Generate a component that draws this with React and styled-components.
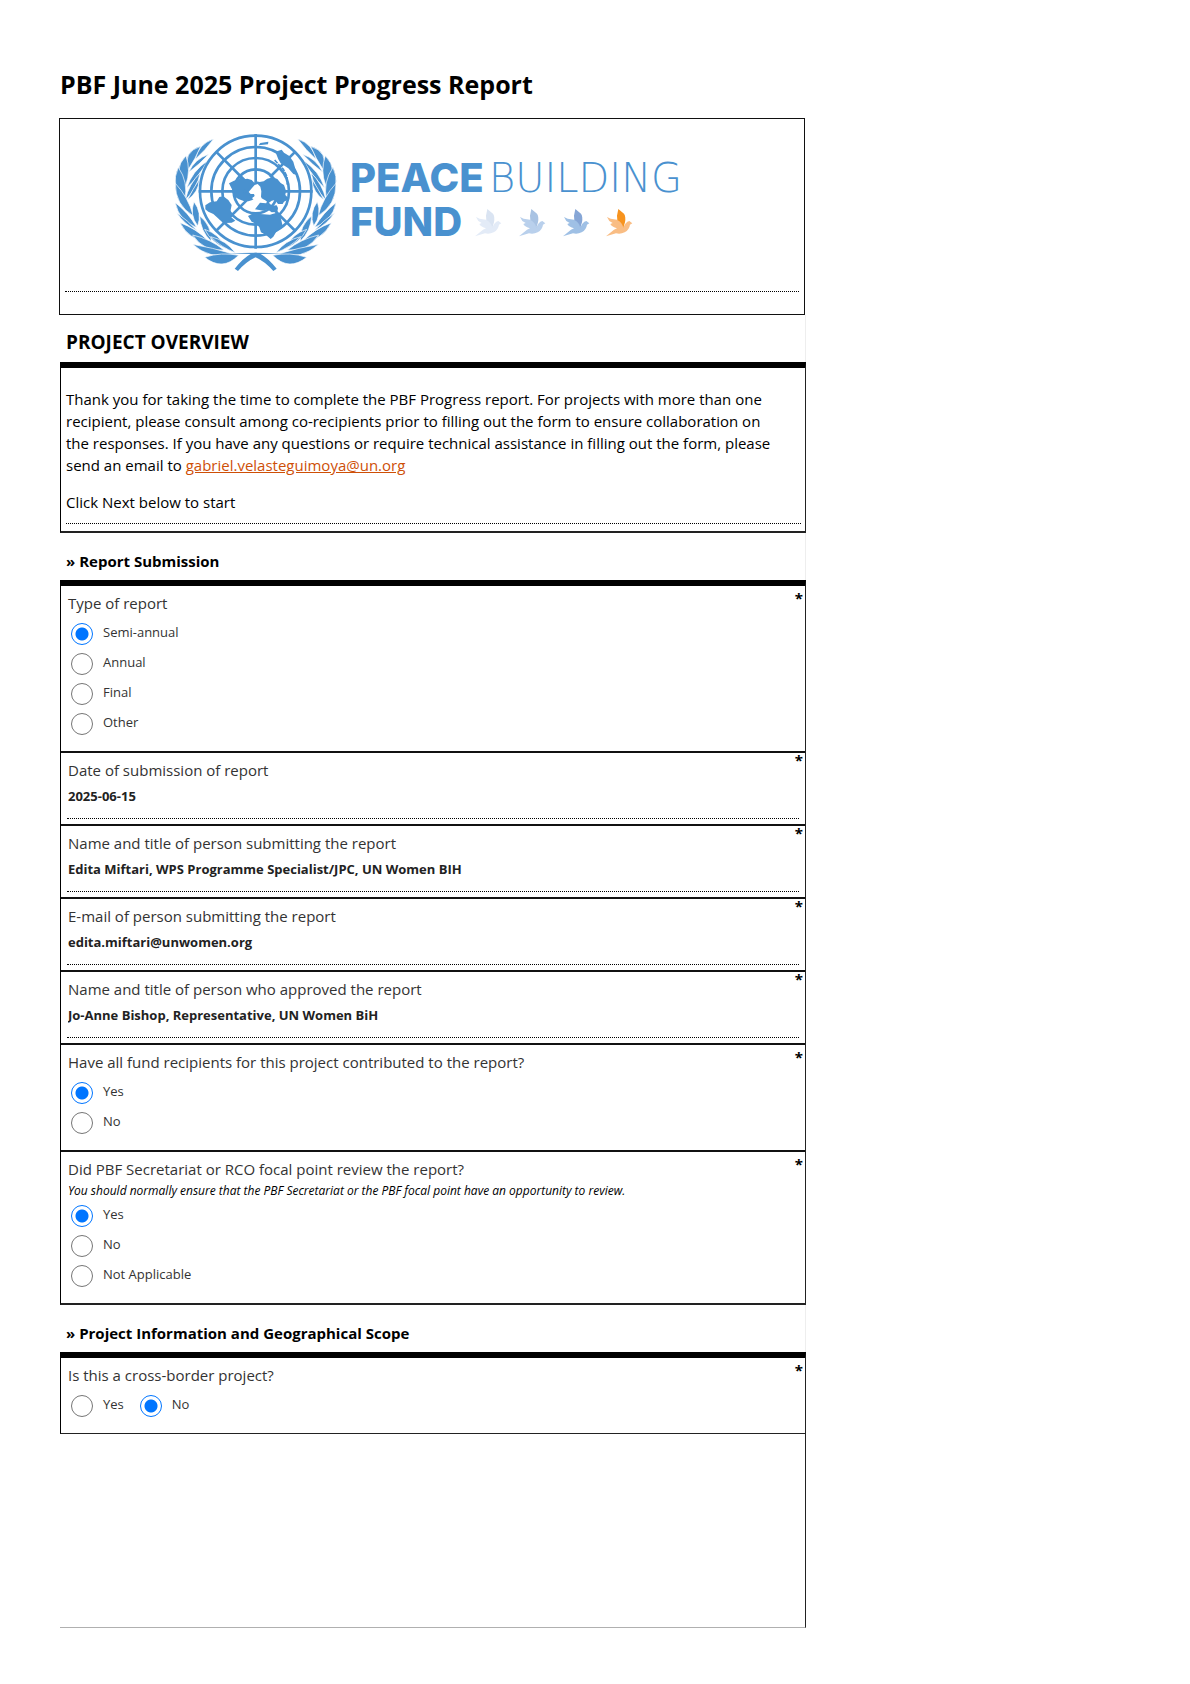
import { useState } from "react";
import styled, { createGlobalStyle } from "styled-components";

const GlobalStyle = createGlobalStyle`
  * {
    box-sizing: border-box;
  }
  body {
    margin: 0;
    background-color: #ffffff;
    color: #000000;
    font-family: "Open Sans", "Noto Sans", sans-serif;
    font-size: 15px;
    line-height: 20px;
  }
`;

const Page = styled.main`
  width: 100%;
  max-width: 865px;
  padding: 65px 59px 56px;
`;

const Title = styled.h1`
  margin: 0 0 15px 1px;
  font-size: 25px;
  line-height: 38px;
  font-weight: 700;
`;

const LogoBox = styled.header`
  margin-right: 1px;
  padding: 1px 5px 22px;
  border: 1px solid #111111;
`;

const LogoSvg = styled.svg`
  display: block;
  width: 100%;
  max-width: 544px;
  margin: 0 auto 11px;
`;

const DottedLine = styled.hr`
  margin: 0;
  border: 0;
  border-top: 1px dotted #000000;
`;

const Form = styled.form`
  margin-left: 1px;
`;

const SectionTitle = styled.h2`
  margin: 0;
  padding: 14px 6px 7px;
  border-right: 1px solid #eeeeee;
  font-size: 19px;
  line-height: 26px;
  font-weight: 700;
`;

const GroupTitle = styled.h3`
  margin: 0;
  padding: 18px 6px 9px;
  border-right: 1px solid #eeeeee;
  font-size: 15px;
  line-height: 20px;
  font-weight: 700;
`;

const Panel = styled.section`
  border: 1px solid #222222;
  border-left-color: #000000;
  border-top: 6px solid #000000;
  border-bottom-width: ${(props) => (props.$thin ? "1px" : "2px")};
`;

const Intro = styled.div`
  padding: 20px 4px 7px 5px;
`;

const Paragraph = styled.p`
  margin: 0 24px ${(props) => (props.$last ? "10px" : "15px")} 0;
  line-height: 22px;
`;

const MailLink = styled.a`
  color: #ce4f07;
  text-decoration: underline;
`;

const Question = styled.div`
  position: relative;
  padding: 7px 6px 5px;
  color: #333333;
  & + & {
    border-top: 2px solid #111111;
  }
`;

const ChoiceQuestion = styled.fieldset`
  position: relative;
  min-width: 0;
  margin: 0;
  padding: 7px 7px 12px;
  border: 0;
  color: #333333;
  ${Question} + &, & + & {
    border-top: 2px solid #111111;
  }
  & + ${Question} {
    border-top: 2px solid #111111;
  }
`;

const QuestionLabel = styled.label`
  display: block;
  padding-left: 1px;
`;

/* float keeps the legend inside the padding of the fieldset */
const Legend = styled.legend`
  float: left;
  width: 100%;
  padding: 0;
`;

const Required = styled.span`
  position: absolute;
  top: ${(props) => (props.$high ? "-3px" : "2px")};
  right: 2px;
  color: #000000;
  font-weight: 700;
`;

const Hint = styled.p`
  clear: both;
  margin: 0;
  padding-top: 2px;
  color: #000000;
  font-size: 12px;
  font-style: italic;
`;

const TextInput = styled.input`
  display: block;
  width: 100%;
  padding: 7px 1px 13px;
  border: 0;
  border-bottom: 1px dotted #000000;
  background: transparent;
  color: #222222;
  font-family: inherit;
  font-size: 13px;
  line-height: 18px;
  height: 39px;
  font-weight: 700;
  outline: none;
`;

const Options = styled.div`
  clear: both;
  display: flex;
  flex-direction: ${(props) => (props.$inline ? "row" : "column")};
  gap: ${(props) => (props.$inline ? "16px" : "0")};
  padding: ${(props) => (props.$tight ? "0" : "6px")} 0 0 3px;
`;

const Option = styled.label`
  display: flex;
  align-items: flex-start;
  gap: 10px;
  height: 30px;
  padding-top: 4px;
  font-size: 13px;
  line-height: 18px;
`;

const Radio = styled.input`
  appearance: none;
  flex: none;
  width: 22px;
  height: 22px;
  margin: 0;
  border: 1px solid #767676;
  border-radius: 50%;
  background-color: #ffffff;
  &:checked {
    border-color: #0075ff;
    background: radial-gradient(circle, #0075ff 6px, #ffffff 7px);
  }
`;

const EmptyPanel = styled.div`
  height: 194px;
  border-right: 1px solid #222222;
  border-bottom: 1px solid #b0b0b0;
`;

const BLUE = "#4991cf";

// [tip x, tip y, base x, base y, outer bulge, inner bulge]
const leaves = [
  [161, 57, 106, 118, 24, 4],
  [122, 79, 84, 150, 40, 4],
  [146, 103, 86, 157, 18, 4],
  [78, 107, 77, 196, 42, 16],
  [143, 122, 80, 204, 18, 8],
  [55, 142, 74, 240, 36, 22],
  [121, 158, 76, 240, 14, 14],
  [46, 190, 100, 288, 32, 14],
  [118, 178, 82, 240, 2, 18],
  [46, 248, 110, 322, 28, 10],
  [102, 245, 113, 318, 20, 20],
  [60, 308, 146, 364, 30, 12],
  [119, 288, 153, 364, 16, 22],
  [50, 278, 112, 332, 12, 4],
  [98, 345, 192, 390, 32, 12],
  [134, 328, 198, 386, 16, 20],
  [98, 373, 216, 401, 34, 4],
  [152, 350, 226, 398, 10, 16],
  [134, 412, 236, 406, 46, 14],
];

const leafPath = ([tx, ty, bx, by, outer, inner]) => {
  const length = Math.hypot(bx - tx, by - ty);
  const nx = -(by - ty) / length;
  const ny = (bx - tx) / length;
  const mx = (tx + bx) / 2;
  const my = (ty + by) / 2;
  return `M${tx} ${ty} Q${mx + nx * outer} ${my + ny * outer} ${bx} ${by} Q${mx - nx * inner} ${my - ny * inner} ${tx} ${ty} Z`;
};

const birds = [
  { x: 945, wing: "#dae4f2", body: "#e3ebf7" },
  { x: 1077, wing: "#a9c3e3", body: "#b9d0ec" },
  { x: 1209, wing: "#86a6d6", body: "#9fc0e5" },
  { x: 1338, wing: "#f7931e", body: "#f9bd84" },
];

function Branch() {
  return (
    <g>
      {leaves.map((leaf, i) => (
        <path key={i} d={leafPath(leaf)} stroke="#ffffff" strokeWidth="2" />
      ))}
      <path d="M224 446 Q250 414 272 402 L200 400 290 398 300 406 Q262 420 234 453 Z" />
    </g>
  );
}

function Emblem() {
  return (
    <g transform="scale(0.33333)" fill={BLUE}>
      <Branch />
      <g transform="translate(574 0) scale(-1 1)">
        <Branch />
      </g>
      <g fill="none" stroke={BLUE} strokeWidth="8">
        <circle cx="287" cy="214" r="167" />
        <circle cx="287" cy="214" r="133" />
        <circle cx="287" cy="214" r="100" />
        <circle cx="287" cy="214" r="66" />
        <path d="M287 42V190M287 280V386M116 214H250M330 214H458M168 95L262 189M406 95L330 171M168 333L262 239M406 333L320 247" />
      </g>
      <path d="M207 190l15-8 13-4 8-7 9 7 10-2 13 4 8 8 6-4 10 2 12-2 11-8 16-4 14 5 10 12 10 6 6 17-2 13 12 12-16 8-4 7h-14l-9-12-10 2-10 8-7-8-13-7-5-13-12 12-13 7-10 3-14-1-14-5-13-8-6-10-2-12z" />
      <path d="M276 204l8-9 9-3 8 8 3 14-1 16-7 12-12 0-8-8 8-6-2-6-10 0-6-6z" fill="#ffffff" />
      <path d="M266 226l12-4 3 8-10 5zM248 212l8-3 4 8-9 4z" />
      <path d="M136 256l14-9 20-3 8-13 12-2 15 11 10 15-3 15v20l14 12-11 6-20 1-15-9-20-18-15-7-9-7z" />
      <path d="M285 268l15-20 18 2 12 8 20-2 4 8-2 12-17 1-13-9-12 4z" />
      <path d="M264 288l16-8 20 2 30 2 20-6 12 14 6 26-16 12-12 20-8 7-14-12-15-8-5-15-8-10-15-7z" />
      <path d="M346 95l19-6 7 9 16 10 12 17 11 40-11-3-15-17-23-15-7-12z" />
      <path d="M301 69l24-4-1 8-28 3z" />
      <path d="M344 120l14 16 12 12 11 22 1 24" fill="none" stroke={BLUE} strokeWidth="5" strokeDasharray="13 3" />
    </g>
  );
}

function Logo() {
  return (
    <LogoSvg viewBox="0 0 544 160" role="img" aria-label="Peacebuilding Fund">
      <Emblem />
      <g fill={BLUE} fontFamily="Inter, sans-serif" fontSize="40">
        <text x="190" y="72" fontWeight="800">PEACE</text>
        <text x="329" y="72" fontWeight="200" fontFamily="'DejaVu Sans Light', 'DejaVu Sans', sans-serif">BUILDING</text>
        <text x="190" y="116" fontWeight="800">FUND</text>
      </g>
      <g transform="scale(0.33333)">
        {birds.map((bird) => (
          <g key={bird.x} transform={`translate(${bird.x} 267)`}>
            <path
              d="M3 24L14 29 38 33Q50 40 52 55L58 44Q64 36 70 36L79 43 72 47Q70 62 56 70 44 76 30 73L0 82 24 62 33 58Q18 54 13 45L20 42 10 36Z"
              fill={bird.body}
            />
            <path d="M37 0L54 14Q60 22 57 40L52 56Q48 40 34 33L33 20Z" fill={bird.wing} />
          </g>
        ))}
      </g>
    </LogoSvg>
  );
}

function TextQuestion({ id, label, type = "text", value }) {
  return (
    <Question>
      <QuestionLabel htmlFor={id}>{label}</QuestionLabel>
      <Required $high>*</Required>
      <TextInput id={id} name={id} type={type} defaultValue={value} />
    </Question>
  );
}

function RadioQuestion({ name, label, hint, options, initial, inline }) {
  const [selected, setSelected] = useState(initial);

  return (
    <ChoiceQuestion>
      <Legend>{label}</Legend>
      <Required>*</Required>
      {hint && <Hint>{hint}</Hint>}
      <Options $inline={inline} $tight={Boolean(hint)}>
        {options.map((option) => (
          <Option key={option}>
            <Radio
              type="radio"
              name={name}
              value={option}
              checked={selected === option}
              onChange={() => setSelected(option)}
            />
            {option}
          </Option>
        ))}
      </Options>
    </ChoiceQuestion>
  );
}

function App() {
  return (
    <>
      <GlobalStyle />
      <Page>
        <Title>PBF June 2025 Project Progress Report</Title>
        <LogoBox>
          <Logo />
          <DottedLine />
        </LogoBox>

        <Form onSubmit={(e) => e.preventDefault()}>
          <SectionTitle>PROJECT OVERVIEW</SectionTitle>
          <Panel>
            <Intro>
              <Paragraph>
                Thank you for taking the time to complete the PBF Progress report. For projects with more than one
                recipient, please consult among co-recipients prior to filling out the form to ensure collaboration on
                the responses. If you have any questions or require technical assistance in filling out the form, please
                send an email to{" "}
                <MailLink href="mailto:gabriel.velasteguimoya@un.org">gabriel.velasteguimoya@un.org</MailLink>
              </Paragraph>
              <Paragraph $last>Click Next below to start</Paragraph>
              <DottedLine />
            </Intro>
          </Panel>

          <GroupTitle>» Report Submission</GroupTitle>
          <Panel>
            <RadioQuestion
              name="reportType"
              label="Type of report"
              options={["Semi-annual", "Annual", "Final", "Other"]}
              initial="Semi-annual"
            />
            <TextQuestion id="submissionDate" label="Date of submission of report" value="2025-06-15" />
            <TextQuestion
              id="submitter"
              label="Name and title of person submitting the report"
              value="Edita Miftari, WPS Programme Specialist/JPC, UN Women BIH"
            />
            <TextQuestion
              id="submitterEmail"
              type="email"
              label="E-mail of person submitting the report"
              value="edita.miftari@unwomen.org"
            />
            <TextQuestion
              id="approver"
              label="Name and title of person who approved the report"
              value="Jo-Anne Bishop, Representative, UN Women BiH"
            />
            <RadioQuestion
              name="recipientsContributed"
              label="Have all fund recipients for this project contributed to the report?"
              options={["Yes", "No"]}
              initial="Yes"
            />
            <RadioQuestion
              name="focalPointReview"
              label="Did PBF Secretariat or RCO focal point review the report?"
              hint="You should normally ensure that the PBF Secretariat or the PBF focal point have an opportunity to review."
              options={["Yes", "No", "Not Applicable"]}
              initial="Yes"
            />
          </Panel>

          <GroupTitle>» Project Information and Geographical Scope</GroupTitle>
          <Panel $thin>
            <RadioQuestion
              name="crossBorder"
              label="Is this a cross-border project?"
              options={["Yes", "No"]}
              initial="No"
              inline
            />
          </Panel>
          <EmptyPanel />
        </Form>
      </Page>
    </>
  );
}

export default App;
